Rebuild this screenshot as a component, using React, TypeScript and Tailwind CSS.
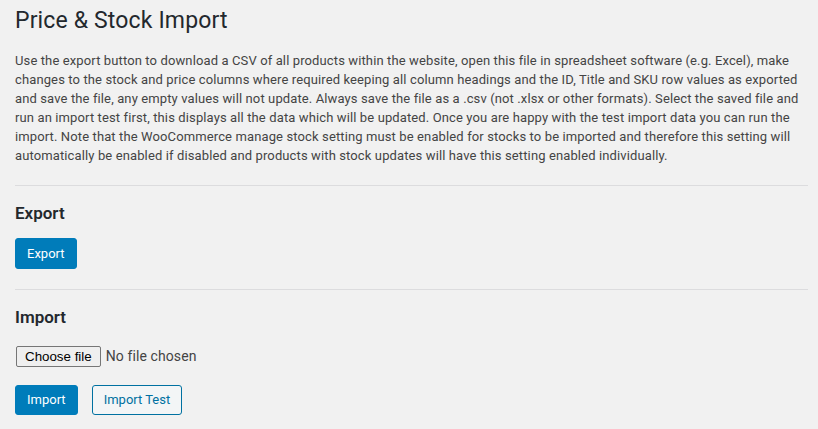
import React from 'react'

const intro = [
  'Use the export button to download a CSV of all products within the website, open this file in spreadsheet software (e.g. Excel), make',
  'changes to the stock and price columns where required keeping all column headings and the ID, Title and SKU row values as exported',
  'and save the file, any empty values will not update. Always save the file as a .csv (not .xlsx or other formats). Select the saved file and',
  'run an import test first, this displays all the data which will be updated. Once you are happy with the test import data you can run the',
  'import. Note that the WooCommerce manage stock setting must be enabled for stocks to be imported and therefore this setting will',
  'automatically be enabled if disabled and products with stock updates will have this setting enabled individually.',
]

export default function App() {
  return (
    <div className="min-h-screen bg-[#f1f1f1] pl-[15px] pr-[10px] font-['Roboto',sans-serif] text-[#444]">
      <h1 className="pt-[6px] text-[23px] leading-[30px] font-normal tracking-[0.15px] text-[#23282d]">Price &amp; Stock Import</h1>

      <p className="mt-[15px] text-[13px] leading-[19px] tracking-[0.12px]">
        {intro.map((line) => (
          <span key={line} className="block whitespace-nowrap">
            {line}
          </span>
        ))}
      </p>

      <hr className="mt-[20px] border-0 border-t border-[#dcdcde]" />

      <h2 className="mt-[16px] text-[17px] leading-[22px] font-semibold text-[#23282d]">Export</h2>
      <button className="mt-[14px] h-[31px] rounded-[3px] border border-[#007cba] bg-[#007cba] px-[11px] text-[13px] text-white">
        Export
      </button>

      <hr className="mt-[20px] border-0 border-t border-[#dcdcde]" />

      <h2 className="mt-[16px] text-[17px] leading-[22px] font-semibold text-[#23282d]">Import</h2>
      <div className="mt-[18px] flex items-center">
        <button className="ml-px h-[21px] rounded-[2px] border border-[#767676] bg-[#efefef] px-[8px] font-['Liberation_Sans',sans-serif] text-[13.33px] leading-none text-black">
          Choose file
        </button>
        <span className="ml-[5px] text-[14px] tracking-[0.1px]">No file chosen</span>
      </div>

      <div className="mt-[18px] flex gap-[14px]">
        <button className="h-[30px] rounded-[3px] border border-[#007cba] bg-[#007cba] px-[11px] text-[13px] text-white">
          Import
        </button>
        <button className="h-[30px] rounded-[3px] border border-[#0071a1] bg-[#f3f5f6] px-[11px] text-[13px] text-[#0071a1]">
          Import Test
        </button>
      </div>
    </div>
  )
}
